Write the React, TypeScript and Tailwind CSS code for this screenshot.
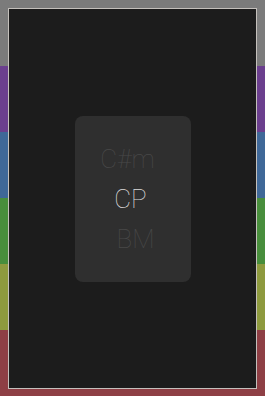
const STRIPES = [
  "bg-[#7b7b7b]",
  "bg-[#6b3f8e]",
  "bg-[#3f6898]",
  "bg-[#488e3c]",
  "bg-[#8e9a3e]",
  "bg-[#8e3f45]",
];

const ITEMS = [
  { label: "C#m", className: "text-[#484848] mr-[10px]" },
  { label: "CP", className: "text-[#dcdcdc] ml-[-4px]" },
  { label: "BM", className: "text-[#484848] ml-[6px]" },
];

export default function App() {
  return (
    <div className="relative w-[265px] h-[398px] overflow-hidden">
      <div className="flex flex-col h-full">
        {STRIPES.map((c, i) => (
          <div key={i} className={`${c} h-[66px] shrink-0`} />
        ))}
      </div>

      <div className="absolute left-[8px] top-[8px] w-[249px] h-[381px] border border-[#c4c0bc] bg-[#1c1c1c] flex items-center justify-center">
        <div
          className="w-[116px] h-[166px] rounded-[8px] bg-[#2f2f2f] flex flex-col items-center justify-center gap-[12px] font-thin text-[26px] leading-[28px]"
          style={{ fontFamily: "Roboto, 'Open Sans', sans-serif" }}
        >
          {ITEMS.map((it) => (
            <span key={it.label} className={it.className}>
              {it.label}
            </span>
          ))}
        </div>
      </div>
    </div>
  );
}
